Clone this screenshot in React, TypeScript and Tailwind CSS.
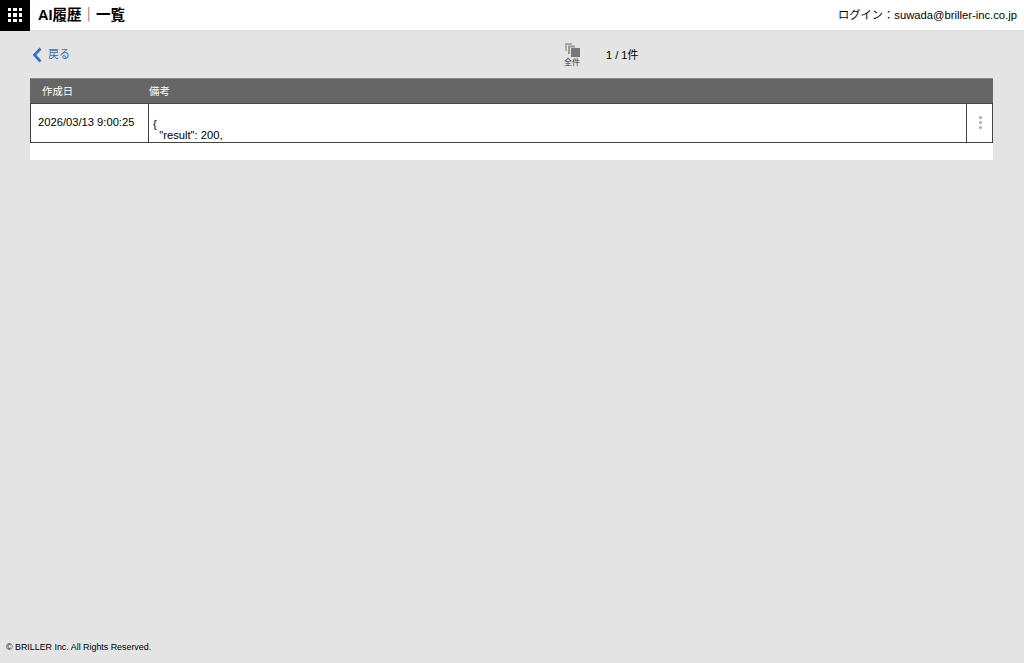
const font = "[font-family:'Liberation_Sans','Noto_Sans_CJK_JP',sans-serif]";

function GridIcon() {
  return (
    <div className="grid grid-cols-3 gap-[2px]">
      {[0, 1, 2, 3, 4, 5, 6, 7, 8].map((i) => (
        <span key={i} className="w-[3.5px] h-[3.5px] bg-white" />
      ))}
    </div>
  );
}

function StackIcon() {
  return (
    <svg width="16" height="14" viewBox="0 0 16 14">
      <path d="M1 0h7v2H3v6H1z" fill="#aaa" />
      <path d="M4 2.5h7v2H6V11H4z" fill="#999" />
      <rect x="7" y="5" width="9" height="9" fill="#777" />
    </svg>
  );
}

export default function App() {
  return (
    <div className={`${font} h-[663px] flex flex-col bg-[#e4e4e4] text-black`}>
      <header className="h-[31px] shrink-0 flex items-center justify-between bg-white border-b border-[#dcdcdc] pr-[7px]">
        <div className="flex items-center h-full">
          <div className="w-[29.5px] h-[31px] bg-black flex items-center justify-center">
            <GridIcon />
          </div>
          <h1 className="ml-[8.5px] mt-[1px] text-[14.5px] font-bold">
            AI履歴<span className="font-normal text-[#333]">｜</span>一覧
          </h1>
        </div>
        <p className="text-[11.25px]">ログイン：suwada@briller-inc.co.jp</p>
      </header>

      <main className="flex-1 pl-[30px] pr-[31px]">
        <div className="relative h-[47px] flex items-center">
          <a className="flex items-center gap-[6px] ml-[2px] text-[11px] text-[#3a6fc4]">
            <svg width="10" height="16" viewBox="0 0 10 16" fill="none" stroke="#2f6fd0" strokeWidth="2.6">
              <path d="M8.5 1.5 2.5 8l6 6.5" />
            </svg>
            戻る
          </a>
          <div className="absolute left-[534px] top-[12px] flex flex-col items-center">
            <StackIcon />
            <span className="text-[8px] leading-[10px] mt-[1px] text-[#333]">全件</span>
          </div>
          <span className="absolute left-[576px] top-[17px] text-[11px] leading-[14px]">1 / 1件</span>
        </div>

        <div className="bg-white h-[82px]">
          <div className="h-[25px] flex items-center pt-[2px] bg-[#666] border-t border-[#888] text-white text-[10.4px]">
            <span className="ml-3 w-[107px]">作成日</span>
            <span>備考</span>
          </div>
          <div className="h-[40px] flex border border-[#444] bg-white text-[11.2px] leading-[11px]">
            <div className="w-[118px] shrink-0 flex items-center pl-[7px] border-r border-[#444] pb-[2px] whitespace-nowrap">
              2026/03/13 9:00:25
            </div>
            <div className="flex-1 pl-1 pt-[15px] whitespace-pre">{"{\n  \"result\": 200,"}</div>
            <div className="w-[26px] shrink-0 flex flex-col items-center justify-center gap-[2px] pl-[1px] pb-[1px] border-l border-[#444]">
              <span className="w-[3px] h-[3px] rounded-full bg-[#aaa]" />
              <span className="w-[3px] h-[3px] rounded-full bg-[#aaa]" />
              <span className="w-[3px] h-[3px] rounded-full bg-[#aaa]" />
            </div>
          </div>
        </div>
      </main>

      <footer className="h-[31px] shrink-0 pl-[6px] pt-[9px] text-[8.9px] leading-[12px]">
        © BRILLER Inc. All Rights Reserved.
      </footer>
    </div>
  );
}
